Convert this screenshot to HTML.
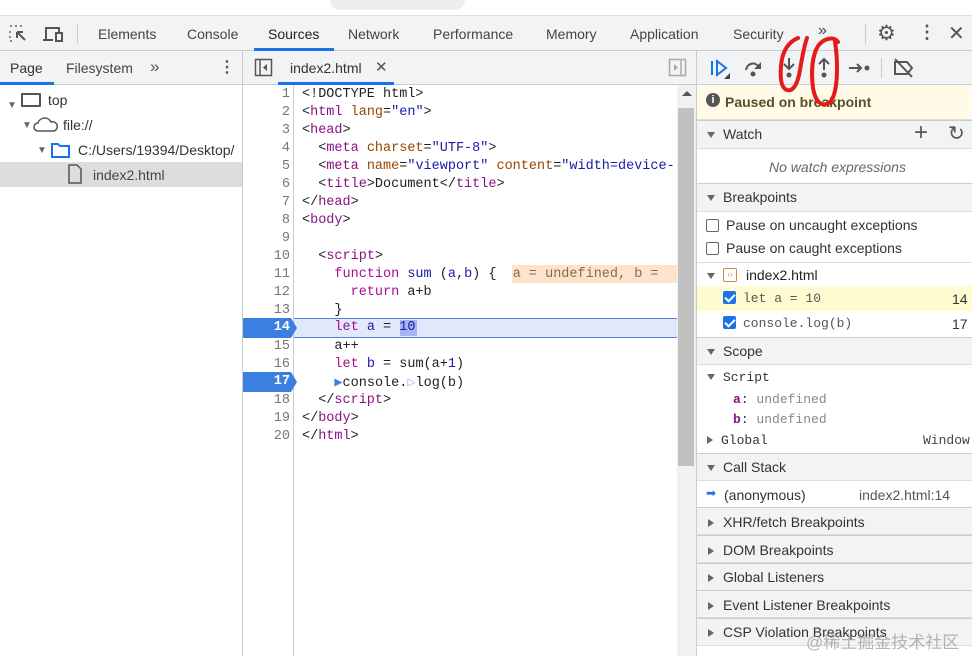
<!DOCTYPE html>
<html><head><style>
*{margin:0;padding:0;box-sizing:border-box}
body{width:972px;height:656px;overflow:hidden;background:#fff;font-family:"Liberation Sans",sans-serif;font-size:14px;color:#333;position:relative}
.a{position:absolute}
.mono{font-family:"Liberation Mono","DejaVu Sans Mono",monospace;font-size:13.5px}
.tab{position:absolute;top:26px;color:#444;font-size:14px}
.ln{position:absolute;left:243px;width:47px;text-align:right;color:#777;}
.cl{position:absolute;left:302px;white-space:pre;color:#222}
.t{color:#881280}.at{color:#994500}.s{color:#1a1aa6}.k{color:#aa0d91}
.hdr{position:absolute;left:697px;width:275px;background:#f1f3f4;border-top:1px solid #ccc;border-bottom:1px solid #ddd}
.tri{display:inline-block;width:0;height:0;border-left:4px solid transparent;border-right:4px solid transparent;border-top:6px solid #666;margin:0 8px 1px 10px}
.trr{display:inline-block;width:0;height:0;border-top:4px solid transparent;border-bottom:4px solid transparent;border-left:6px solid #666;margin:0 9px 0 11px}
.cb{display:inline-block;width:13px;height:13px;border:1px solid #666;border-radius:2px;vertical-align:-2px;margin:0 7px 0 10px;background:#fff}
.cbc{background:#1a73e8;border-color:#1a73e8;position:relative}
.cbc:after{content:"";position:absolute;left:3px;top:0px;width:4px;height:8px;border:solid #fff;border-width:0 2px 2px 0;transform:rotate(45deg)}
</style></head><body>
<div class="a" style="left:0;top:0;width:972px;height:16px;background:#fff;border-bottom:1px solid #ddd"></div>
<div class="a" style="left:330px;top:-10px;width:135px;height:20px;border-radius:10px;background:#eee"></div>
<div class="a" style="left:0;top:16px;width:972px;height:35px;background:#f1f3f4;border-bottom:1px solid #ccc"></div>
<svg class="a" style="left:8px;top:24px" width="22" height="20"><path d="M2 2h2M7 2h2M12 2h2M2 7v2M2 12v2M2 17h2" stroke="#666" stroke-width="1.5"/><path d="M9 8l8 8M9 8v6M9 8h6" stroke="#555" stroke-width="2" fill="none"/></svg>
<svg class="a" style="left:42px;top:24px" width="24" height="20"><path d="M4 15V4h13v4" stroke="#555" stroke-width="2" fill="none"/><path d="M1 16h10" stroke="#555" stroke-width="2"/><rect x="14" y="9" width="6" height="8" stroke="#555" stroke-width="2" fill="none"/></svg>
<div class="a" style="left:77px;top:24px;width:1px;height:20px;background:#ccc"></div>
<div class="tab" style="left:98px">Elements</div>
<div class="tab" style="left:187px">Console</div>
<div class="tab" style="left:268px;color:#222">Sources</div>
<div class="a" style="left:254px;top:48px;width:80px;height:3px;background:#1a73e8"></div>
<div class="tab" style="left:348px">Network</div>
<div class="tab" style="left:433px">Performance</div>
<div class="tab" style="left:546px">Memory</div>
<div class="tab" style="left:630px">Application</div>
<div class="tab" style="left:733px">Security</div>
<div class="tab" style="left:818px;font-size:16px;top:22px">»</div>
<div class="a" style="left:865px;top:24px;width:1px;height:20px;background:#ccc"></div>
<div class="a" style="left:877px;top:21px;font-size:21px;color:#555">⚙</div>
<div class="a" style="left:918px;top:22px;font-size:18px;color:#555;font-weight:bold">⋮</div>
<div class="a" style="left:948px;top:21px;font-size:20px;color:#555">✕</div>
<div class="a" style="left:0;top:51px;width:242px;height:34px;background:#f1f3f4;border-bottom:1px solid #ccc"></div>
<div class="a" style="left:10px;top:60px">Page</div>
<div class="a" style="left:0;top:82px;width:54px;height:3px;background:#1a73e8"></div>
<div class="a" style="left:66px;top:60px;color:#444">Filesystem</div>
<div class="a" style="left:150px;top:57px;font-size:17px;color:#555">»</div>
<div class="a" style="left:219px;top:57px;font-size:16px;color:#555;font-weight:bold">⋮</div>
<div class="a" style="left:242px;top:51px;width:1px;height:605px;background:#ccc"></div>
<div class="a" style="left:7px;top:95px"><span style="font-size:10px;color:#666">▼</span></div>
<div class="a" style="left:21px;top:93px;width:20px;height:14px;border:2px solid #555;border-radius:1px"></div>
<div class="a" style="left:48px;top:92px">top</div>
<div class="a" style="left:22px;top:120px;font-size:10px;color:#666">▼</div>
<svg class="a" style="left:33px;top:117px" width="26" height="16"><path d="M5 14a4 4 0 010-8 7 7 0 0113-1 4.5 4.5 0 013 9z" fill="none" stroke="#555" stroke-width="1.5"/></svg>
<div class="a" style="left:63px;top:117px">file://</div>
<div class="a" style="left:37px;top:145px;font-size:10px;color:#666">▼</div>
<svg class="a" style="left:50px;top:141px" width="22" height="18"><path d="M2 3h6l2 2h9v11H2z" fill="none" stroke="#1a73e8" stroke-width="2"/></svg>
<div class="a" style="left:78px;top:142px;white-space:nowrap;width:164px;overflow:hidden">C:/Users/19394/Desktop/</div>
<div class="a" style="left:0;top:162px;width:242px;height:25px;background:#ddd"></div>
<svg class="a" style="left:67px;top:164px" width="16" height="20"><path d="M2 1h8l4 4v14H2z" fill="none" stroke="#555" stroke-width="1.5"/></svg>
<div class="a" style="left:93px;top:167px;color:#444">index2.html</div>
<div class="a" style="left:243px;top:51px;width:454px;height:34px;background:#f1f3f4;border-bottom:1px solid #ccc"></div>
<svg class="a" style="left:254px;top:58px" width="20" height="20"><rect x="1.5" y="1.5" width="16" height="16" fill="none" stroke="#555" stroke-width="1.5"/><path d="M6 2v15" stroke="#555" stroke-width="1.5"/><path d="M13 6l-4 3.5 4 3.5z" fill="#555"/></svg>
<div class="a" style="left:290px;top:60px">index2.html</div>
<div class="a" style="left:375px;top:58px;font-size:15px;color:#555">✕</div>
<div class="a" style="left:278px;top:82px;width:116px;height:3px;background:#1a73e8"></div>
<svg class="a" style="left:668px;top:58px" width="20" height="20"><rect x="1.5" y="1.5" width="16" height="16" fill="none" stroke="#aaa" stroke-width="1.5"/><path d="M13 2v15" stroke="#aaa" stroke-width="1.5"/><path d="M6 6l4 3.5-4 3.5z" fill="#aaa"/></svg>
<div class="a" style="left:293px;top:85px;width:1px;height:571px;background:#ccc"></div>
<div class="a" style="left:677px;top:85px;width:20px;height:571px;background:#f1f1f1"></div>
<div class="a" style="left:678px;top:108px;width:16px;height:358px;background:#c1c1c1"></div>
<div class="a" style="left:682px;top:91px;width:0;height:0;border-left:5px solid transparent;border-right:5px solid transparent;border-bottom:5px solid #555"></div>
<div class="a" style="left:696px;top:51px;width:1px;height:605px;background:#ccc"></div>
<div class="a" style="left:294px;top:318px;width:383px;height:20px;background:#e1e8fb;border-top:1px solid #5a7fd8;border-bottom:1px solid #5a7fd8"></div>
<div class="a" style="left:400px;top:320px;width:17px;height:16px;background:#a3b6f0"></div>
<svg class="a" style="left:243px;top:318px" width="56" height="20"><path d="M0 0h48l6 10-6 10H0z" fill="#3b7fe0"/></svg>
<svg class="a" style="left:243px;top:372px" width="56" height="20"><path d="M0 0h48l6 10-6 10H0z" fill="#3b7fe0"/></svg>
<div class="a" style="left:512px;top:265px;width:165px;height:18px;background:#fde3cc"></div>
<div class="mono">
<div class="ln" style="top:87px">1</div><div class="ln" style="top:105px">2</div><div class="ln" style="top:123px">3</div><div class="ln" style="top:141px">4</div><div class="ln" style="top:159px">5</div><div class="ln" style="top:177px">6</div><div class="ln" style="top:195px">7</div><div class="ln" style="top:213px">8</div><div class="ln" style="top:231px">9</div><div class="ln" style="top:249px">10</div><div class="ln" style="top:267px">11</div><div class="ln" style="top:285px">12</div><div class="ln" style="top:303px">13</div><div class="ln" style="top:320px;color:#fff;font-weight:bold">14</div><div class="ln" style="top:339px">15</div><div class="ln" style="top:357px">16</div><div class="ln" style="top:374px;color:#fff;font-weight:bold">17</div><div class="ln" style="top:393px">18</div><div class="ln" style="top:411px">19</div><div class="ln" style="top:429px">20</div>
<div class="cl" style="top:87px">&lt;!DOCTYPE html&gt;</div>
<div class="cl" style="top:105px">&lt;<span class="t">html</span> <span class="at">lang</span>=<span class="s">"en"</span>&gt;</div>
<div class="cl" style="top:123px">&lt;<span class="t">head</span>&gt;</div>
<div class="cl" style="top:141px">  &lt;<span class="t">meta</span> <span class="at">charset</span>=<span class="s">"UTF-8"</span>&gt;</div>
<div class="cl" style="top:159px;width:375px;overflow:hidden">  &lt;<span class="t">meta</span> <span class="at">name</span>=<span class="s">"viewport"</span> <span class="at">content</span>=<span class="s">"width=device-</span></div>
<div class="cl" style="top:177px">  &lt;<span class="t">title</span>&gt;Document&lt;/<span class="t">title</span>&gt;</div>
<div class="cl" style="top:195px">&lt;/<span class="t">head</span>&gt;</div>
<div class="cl" style="top:213px">&lt;<span class="t">body</span>&gt;</div>
<div class="cl" style="top:249px">  &lt;<span class="t">script</span>&gt;</div>
<div class="cl" style="top:267px;width:375px;overflow:hidden">    <span class="k">function</span> <span class="s">sum</span> (<span class="s">a</span>,<span class="s">b</span>) {  <span style="color:#8a6a4a">a = undefined, b =</span></div>
<div class="cl" style="top:285px">      <span class="k">return</span> a+b</div>
<div class="cl" style="top:303px">    }</div>
<div class="cl" style="top:320px">    <span class="k">let</span> <span class="s">a</span> = <span class="s">10</span></div>
<div class="cl" style="top:339px">    a++</div>
<div class="cl" style="top:357px">    <span class="k">let</span> <span class="s">b</span> = sum(a+<span class="s">1</span>)</div>
<div class="cl" style="top:374px">    <span style="color:#3b7fe0">▶</span>console.<span style="color:#9cc0f0">▷</span>log(b)</div>
<div class="cl" style="top:393px">  &lt;/<span class="t">script</span>&gt;</div>
<div class="cl" style="top:411px">&lt;/<span class="t">body</span>&gt;</div>
<div class="cl" style="top:429px">&lt;/<span class="t">html</span>&gt;</div>
</div>
<div class="a" style="left:697px;top:51px;width:275px;height:34px;background:#f1f3f4;border-bottom:1px solid #ccc"></div>
<svg class="a" style="left:708px;top:57px" width="24" height="24"><path d="M4 4v14" stroke="#1a73e8" stroke-width="2"/><path d="M9 4l9 7-9 7z" fill="none" stroke="#1a73e8" stroke-width="2"/><path d="M22 16v6h-6z" fill="#444"/></svg>
<svg class="a" style="left:742px;top:58px" width="24" height="22"><path d="M4 12a7 7 0 0113-3" fill="none" stroke="#555" stroke-width="2"/><path d="M19 4v7h-7z" fill="#555"/><circle cx="11" cy="16" r="2.5" fill="#555"/></svg>
<svg class="a" style="left:779px;top:56px" width="20" height="26"><path d="M10 2v11M5 8l5 5 5-5" fill="none" stroke="#555" stroke-width="2"/><circle cx="10" cy="19" r="2.5" fill="#555"/></svg>
<svg class="a" style="left:814px;top:56px" width="20" height="26"><path d="M10 14V3M5 8l5-5 5 5" fill="none" stroke="#555" stroke-width="2"/><circle cx="10" cy="19" r="2.5" fill="#555"/></svg>
<svg class="a" style="left:847px;top:58px" width="26" height="20"><path d="M2 10h12M10 6l4 4-4 4" fill="none" stroke="#555" stroke-width="2"/><circle cx="20" cy="10" r="2.5" fill="#555"/></svg>
<div class="a" style="left:881px;top:58px;width:1px;height:20px;background:#ccc"></div>
<svg class="a" style="left:892px;top:57px" width="24" height="22"><path d="M3 5h12l5 6-5 6H3z" fill="none" stroke="#555" stroke-width="2"/><path d="M3 2l17 18" stroke="#555" stroke-width="2"/></svg>
<div class="a" style="left:697px;top:86px;width:275px;height:34px;background:#fffbe6;border-bottom:1px solid #ddd"></div>
<div class="a" style="left:706px;top:93px;width:14px;height:14px;border-radius:50%;background:#555;color:#fff;font-size:11px;text-align:center;line-height:14px;font-weight:bold">i</div>
<div class="a" style="left:725px;top:94px;font-weight:bold;color:#5a4e2a">Paused on breakpoint</div>
<div class="hdr" style="top:120px;height:29px"></div>
<div class="a" style="left:697px;top:126px"><span class="tri"></span>Watch</div>
<div class="a" style="left:914px;top:119px;font-size:24px;color:#555">+</div>
<div class="a" style="left:948px;top:121px;font-size:20px;color:#555">↻</div>
<div class="a" style="left:769px;top:159px;font-style:italic;color:#666">No watch expressions</div>
<div class="hdr" style="top:183px;height:29px"></div>
<div class="a" style="left:697px;top:189px"><span class="tri"></span>Breakpoints</div>
<div class="a" style="left:697px;top:217px"><span class="cb" style="margin-left:9px"></span>Pause on uncaught exceptions</div>
<div class="a" style="left:697px;top:240px"><span class="cb" style="margin-left:9px"></span>Pause on caught exceptions</div>
<div class="a" style="left:697px;top:262px;width:275px;border-top:1px solid #ddd"></div>
<div class="a" style="left:697px;top:267px"><span class="tri"></span></div>
<div class="a" style="left:723px;top:268px;width:14px;height:14px;border:1.5px solid #d08a3a;border-radius:2px;font-size:8px;color:#d08a3a;text-align:center;line-height:11px">‹›</div>
<div class="a" style="left:746px;top:267px;color:#222">index2.html</div>
<div class="a" style="left:697px;top:286px;width:275px;height:25px;background:#fffbd0"></div>
<div class="a mono" style="left:697px;top:291px;color:#555;font-size:13px"><span class="cb cbc" style="margin-left:26px"></span>let a = 10</div>
<div class="a" style="left:952px;top:291px">14</div>
<div class="a mono" style="left:697px;top:316px;color:#555;font-size:13px"><span class="cb cbc" style="margin-left:26px"></span>console.log(b)</div>
<div class="a" style="left:952px;top:316px">17</div>
<div class="hdr" style="top:337px;height:28px"></div>
<div class="a" style="left:697px;top:343px"><span class="tri"></span>Scope</div>
<div class="a mono" style="left:697px;top:370px;font-size:13px"><span class="tri"></span>Script</div>
<div class="a mono" style="left:733px;top:392px;font-size:13px"><b style="color:#881280">a</b>: <span style="color:#888">undefined</span></div>
<div class="a mono" style="left:733px;top:412px;font-size:13px"><b style="color:#881280">b</b>: <span style="color:#888">undefined</span></div>
<div class="a mono" style="left:697px;top:433px;font-size:13px"><span class="trr" style="margin-left:10px;margin-right:8px"></span>Global</div>
<div class="a mono" style="left:923px;top:433px;color:#444;font-size:13px">Window</div>
<div class="hdr" style="top:453px;height:28px"></div>
<div class="a" style="left:697px;top:459px"><span class="tri"></span>Call Stack</div>
<div class="a" style="left:706px;top:486px;color:#1a73e8;font-size:12px">➡</div>
<div class="a" style="left:724px;top:487px">(anonymous)</div>
<div class="a" style="left:859px;top:487px;color:#555">index2.html:14</div>
<div class="hdr" style="top:507px;height:28px"></div>
<div class="a" style="left:697px;top:514px"><span class="trr"></span>XHR/fetch Breakpoints</div>
<div class="hdr" style="top:535px;height:28px"></div>
<div class="a" style="left:697px;top:542px"><span class="trr"></span>DOM Breakpoints</div>
<div class="hdr" style="top:563px;height:28px"></div>
<div class="a" style="left:697px;top:569px"><span class="trr"></span>Global Listeners</div>
<div class="hdr" style="top:590px;height:28px"></div>
<div class="a" style="left:697px;top:597px"><span class="trr"></span>Event Listener Breakpoints</div>
<div class="hdr" style="top:618px;height:28px"></div>
<div class="a" style="left:697px;top:624px"><span class="trr"></span>CSP Violation Breakpoints</div>
<div class="a" style="left:806px;top:628px;font-size:17px;color:rgba(150,150,150,0.7);font-family:'Liberation Sans','Noto Sans CJK SC',sans-serif">@稀土掘金技术社区</div>
<svg class="a" style="left:0;top:0;z-index:10" width="972" height="120"><path d="M798 38C788 42 782 52 781 66c-1 12 0 22 6 24 7 2 11-8 13-20 2-12 4-24 7-32" fill="none" stroke="#e41b1b" stroke-width="4" stroke-linecap="round"/><path d="M838 42c-4-6-14-4-20 4-6 10-7 26-5 42 2 12 7 18 14 16 8-3 10-20 10-36 0-12-1-20-2-26" fill="none" stroke="#e41b1b" stroke-width="4" stroke-linecap="round"/></svg>
</body></html>
